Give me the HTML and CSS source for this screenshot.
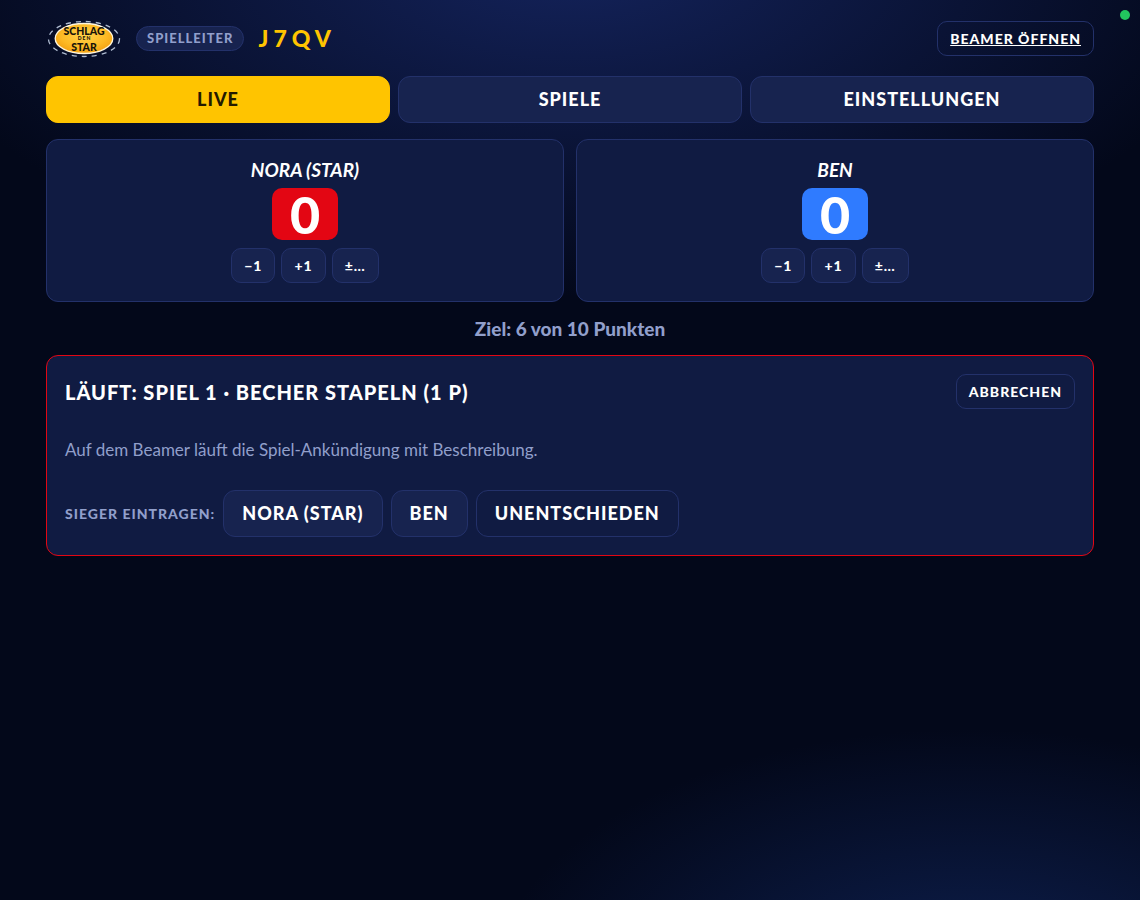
FILE: index.html
```html
<!DOCTYPE html>
<html lang="de">
<head>
    <meta charset="UTF-8">
    <meta name="viewport" content="width=device-width, initial-scale=1.0">
    <title>Schlag den Star - Spielleiter</title>
    <link rel="stylesheet" href="styles.css">
</head>
<body>
    <span class="status-dot"></span>

    <div class="container">
        <header class="topbar">
            <svg class="logo" viewBox="0 0 76 40" role="img" aria-label="Schlag den Star">
                <defs>
                    <radialGradient id="gold" cx="50%" cy="40%" r="65%">
                        <stop offset="0" stop-color="#ffd34a"/>
                        <stop offset="0.6" stop-color="#fdb924"/>
                        <stop offset="1" stop-color="#f09a0c"/>
                    </radialGradient>
                </defs>
                <ellipse cx="38" cy="21" rx="35.5" ry="17.5" fill="none" stroke="#aebbd0" stroke-width="1.3" stroke-dasharray="5 5"/>
                <ellipse cx="38" cy="20.5" rx="28.8" ry="15" fill="url(#gold)" stroke="#fff6dc" stroke-width="1.3"/>
                <text class="logo-text" x="38" y="16.5" font-size="10.5">SCHLAG</text>
                <text class="logo-text" x="38.5" y="22" font-size="5" letter-spacing="1">DEN</text>
                <text class="logo-text" x="38" y="32.5" font-size="10.5">STAR</text>
            </svg>
            <span class="role">Spielleiter</span>
            <span class="code">J7QV</span>
            <a href="#" class="btn small ghost beamer">Beamer öffnen</a>
        </header>

        <nav class="tabs">
            <button class="btn active">Live</button>
            <button class="btn">Spiele</button>
            <button class="btn">Einstellungen</button>
        </nav>

        <!-- Score of both players -->
        <div class="scores">
            <section class="panel player">
                <div class="name">NORA (STAR)</div>
                <div class="score red">0</div>
                <div class="score-buttons">
                    <button class="btn small">−1</button>
                    <button class="btn small">+1</button>
                    <button class="btn small">±…</button>
                </div>
            </section>
            <section class="panel player">
                <div class="name">BEN</div>
                <div class="score blue">0</div>
                <div class="score-buttons">
                    <button class="btn small">−1</button>
                    <button class="btn small">+1</button>
                    <button class="btn small">±…</button>
                </div>
            </section>
        </div>

        <p class="goal">Ziel: 6 von 10 Punkten</p>

        <!-- Running game -->
        <section class="panel running">
            <div class="running-head">
                <h2>Läuft: Spiel 1 · Becher stapeln (1 P)</h2>
                <button class="btn small ghost">Abbrechen</button>
            </div>
            <p class="hint">Auf dem Beamer läuft die Spiel-Ankündigung mit Beschreibung.</p>
            <div class="winner">
                <span class="label">Sieger eintragen:</span>
                <button class="btn">Nora (Star)</button>
                <button class="btn">Ben</button>
                <button class="btn ghost">Unentschieden</button>
            </div>
        </section>
    </div>
</body>
</html>
```
FILE: styles.css
```css
:root {
    --bg: #03081a;
    --panel: #101b42;
    --button: #17234f;
    --line: #23316a;
    --muted: #919fcb;
    --gold: #ffc400;
    --red: #e30613;
    --blue: #2f7bff;
}
* {
    box-sizing: border-box;
}
body {
    margin: 0;
    min-height: 100vh;
    font-family: Lato, "Liberation Sans", sans-serif;
    font-size: 18px;
    color: #fff;
    background:
        radial-gradient(ellipse 42% 29% at 85% 110%, #0e2050, transparent),
        radial-gradient(ellipse 60% 38% at 50% -5%, #14235c, transparent),
        var(--bg);
}
h2, p {
    margin: 0;
}
.status-dot {
    position: fixed;
    top: 10px;
    right: 10px;
    width: 10px;
    height: 10px;
    border-radius: 50%;
    background: #22c55e;
}
.container {
    max-width: 1080px;
    margin: 0 auto;
    padding: 18px 16px;
}

/* Header */
.topbar {
    display: flex;
    align-items: center;
    gap: 14px;
    height: 40px;
    margin-bottom: 18px;
}
.logo {
    width: 76px;
    height: 40px;
}
.logo-text {
    font-weight: 900;
    text-anchor: middle;
    fill: #17130a;
}
.role {
    padding: 0 10px;
    border: 1px solid var(--line);
    border-radius: 999px;
    background: var(--button);
    color: var(--muted);
    font-size: 13px;
    font-weight: 900;
    line-height: 23px;
    letter-spacing: 1px;
    text-transform: uppercase;
}
.code {
    color: var(--gold);
    font-size: 23px;
    font-weight: 900;
    letter-spacing: 5px;
}
.beamer {
    margin-left: auto;
    text-decoration: underline;
}

/* Buttons */
.btn {
    padding: 0 18px;
    border: 1px solid var(--line);
    border-radius: 12px;
    background: var(--button);
    color: #fff;
    font-family: inherit;
    font-size: 18px;
    font-weight: 900;
    line-height: 45px;
    letter-spacing: 1px;
    text-transform: uppercase;
    cursor: pointer;
}
.btn.small {
    padding: 0 12px;
    border-radius: 10px;
    font-size: 14px;
    line-height: 33px;
}
.btn.ghost {
    background: transparent;
}
.btn.active {
    border-color: var(--gold);
    background: var(--gold);
    color: #241a00;
}
.tabs {
    display: grid;
    grid-template-columns: repeat(3, 1fr);
    gap: 8px;
    margin-bottom: 16px;
}

/* Panels */
.panel {
    padding: 18px;
    border: 1px solid var(--line);
    border-radius: 12px;
    background: var(--panel);
}
.scores {
    display: grid;
    grid-template-columns: 1fr 1fr;
    gap: 12px;
}
.player {
    display: flex;
    flex-direction: column;
    align-items: center;
}
.name {
    margin-bottom: 6px;
    font-size: 19px;
    font-style: italic;
    font-weight: 700;
    line-height: 24px;
}
.score {
    margin-bottom: 8px;
    padding: 0 18px;
    border-radius: 10px;
    font-size: 52px;
    font-weight: 900;
    line-height: 52px;
}
.score.red {
    background: var(--red);
}
.score.blue {
    background: var(--blue);
}
.score-buttons {
    display: flex;
    gap: 6px;
}
.goal {
    margin: 14px 0;
    color: var(--muted);
    font-size: 19px;
    font-weight: 900;
    line-height: 25px;
    text-align: center;
}

/* Running game */
.running {
    display: flex;
    flex-direction: column;
    gap: 27px;
    border-color: var(--red);
}
.running-head {
    display: flex;
    justify-content: space-between;
    align-items: center;
}
.running h2 {
    font-size: 20px;
    font-weight: 900;
    letter-spacing: 1px;
    text-transform: uppercase;
}
.hint {
    color: var(--muted);
    font-size: 17px;
    line-height: 27px;
}
.winner {
    display: flex;
    flex-wrap: wrap;
    align-items: center;
    gap: 8px;
}
.label {
    color: var(--muted);
    font-size: 14px;
    font-weight: 900;
    letter-spacing: 1px;
    text-transform: uppercase;
}
```
